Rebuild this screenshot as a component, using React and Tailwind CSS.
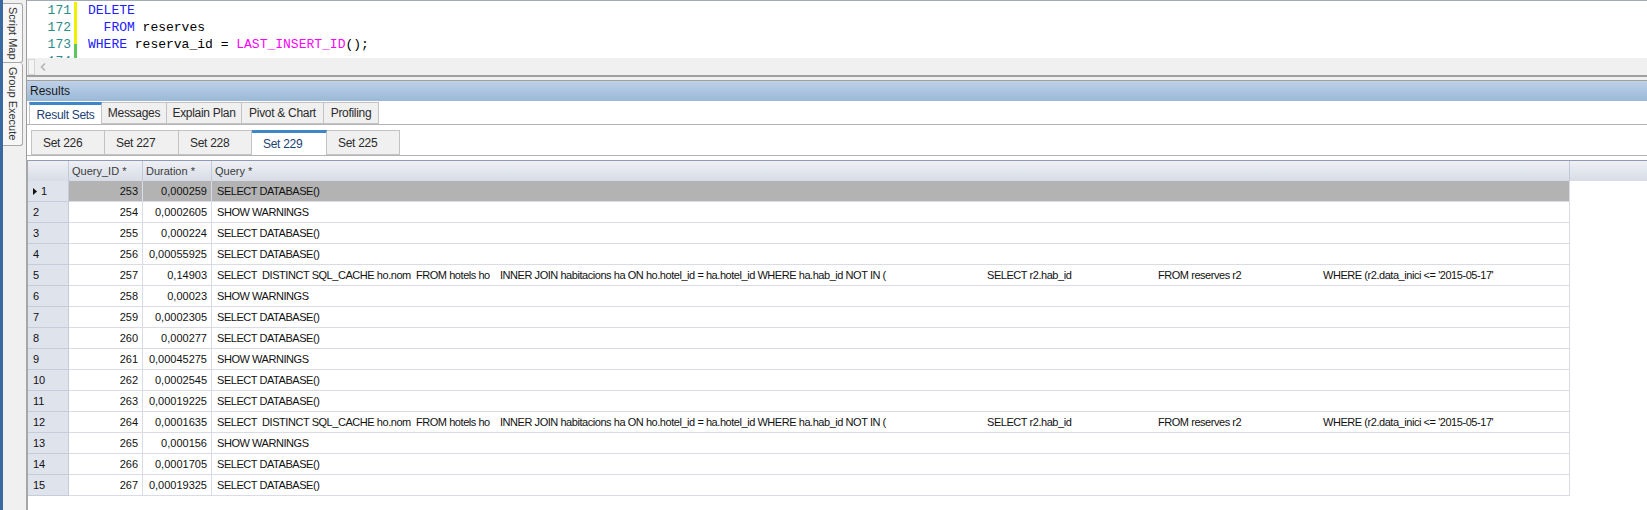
import React from "react";

const rows = [
  [1, "253", "0,000259", "SELECT DATABASE()"],
  [2, "254", "0,0002605", "SHOW WARNINGS"],
  [3, "255", "0,000224", "SELECT DATABASE()"],
  [4, "256", "0,00055925", "SELECT DATABASE()"],
  [5, "257", "0,14903", "LONG"],
  [6, "258", "0,00023", "SHOW WARNINGS"],
  [7, "259", "0,0002305", "SELECT DATABASE()"],
  [8, "260", "0,000277", "SELECT DATABASE()"],
  [9, "261", "0,00045275", "SHOW WARNINGS"],
  [10, "262", "0,0002545", "SELECT DATABASE()"],
  [11, "263", "0,00019225", "SELECT DATABASE()"],
  [12, "264", "0,0001635", "LONG"],
  [13, "265", "0,000156", "SHOW WARNINGS"],
  [14, "266", "0,0001705", "SELECT DATABASE()"],
  [15, "267", "0,00019325", "SELECT DATABASE()"],
];

const topTabs = [
  ["Result Sets", "w-[73px]", true],
  ["Messages", "w-[65px]", false],
  ["Explain Plan", "w-[75px]", false],
  ["Pivot & Chart", "w-[82px]", false],
  ["Profiling", "w-[55px]", false],
];

const setTabs = [
  ["Set 226", "w-[74px]", false],
  ["Set 227", "w-[74px]", false],
  ["Set 228", "w-[73px]", false],
  ["Set 229", "w-[75px]", true],
  ["Set 225", "w-[73px]", false],
];

function Tab({ label, width, active, first, left }) {
  return (
    <div
      className={
        "h-full flex items-center whitespace-nowrap border-[#c3c3c3] border-r " +
        width +
        (left ? " pl-[11px]" : " justify-center") +
        (first ? " border-l" : "") +
        (active
          ? " bg-white text-[#1d3f73] border-t-[3px] border-t-[#3f86c8]"
          : " bg-[#f0f0f0] text-[#2b2b2b] border-t mt-[2px] border-b")
      }
    >
      {label}
    </div>
  );
}

function LongQuery() {
  return (
    <div className="flex whitespace-pre tracking-[-0.45px]">
      <span className="w-[199px]">SELECT  DISTINCT SQL_CACHE ho.nom</span>
      <span className="w-[84px]">FROM hotels ho</span>
      <span className="w-[487px]">
        INNER JOIN habitacions ha ON ho.hotel_id = ha.hotel_id WHERE ha.hab_id NOT IN (
      </span>
      <span className="w-[171px]">SELECT r2.hab_id</span>
      <span className="w-[165px]">FROM reserves r2</span>
      <span>WHERE (r2.data_inici &lt;= '2015-05-17'</span>
    </div>
  );
}

export default function App() {
  return (
    <div className="w-[1647px] h-[510px] flex bg-[#f0f0f0] overflow-hidden font-['Liberation_Sans',Arial,sans-serif] text-[11px]">
      {/* side strip */}
      <div className="w-[3px] bg-[#3b68a0]" />
      <div className="w-[23px] pt-[3px] flex flex-col">
        <div className="w-[20px] h-[60px] bg-[#f7f7f7] border border-l-0 border-[#a8a8a8] rounded-r-[3px] flex items-center justify-center text-[#333] text-[11px] [writing-mode:vertical-rl]">
          Script Map
        </div>
        <div className="w-[20px] h-[83px] bg-[#f7f7f7] border border-l-0 border-t-0 border-[#a8a8a8] rounded-r-[3px] flex items-center justify-center text-[#333] text-[11px] [writing-mode:vertical-rl]">
          Group Execute
        </div>
      </div>

      {/* main */}
      <div className="flex-1 flex flex-col border-l border-[#9c9c9c]">
        {/* editor */}
        <div className="h-[58px] bg-white border-t border-[#a3abb6] overflow-hidden flex font-['Liberation_Mono',monospace] text-[13px] leading-[17px] pt-[1px]">
          <div className="w-[44px] text-right text-[#2b8c8c]">
            <div>171</div>
            <div>172</div>
            <div>173</div>
            <div>174</div>
          </div>
          <div className="ml-[3px] w-[3px] flex flex-col">
            <div className="h-[51px] bg-[#f0f000]" />
            <div className="h-[17px] bg-[#5cc85c]" />
          </div>
          <div className="ml-[11px] whitespace-pre text-black">
            <div className="text-[#2020ff]">DELETE</div>
            <div>
              <span className="text-[#2020ff]">  FROM</span> reserves
            </div>
            <div>
              <span className="text-[#2020ff]">WHERE</span> reserva_id ={" "}
              <span className="text-[#ff00ff]">LAST_INSERT_ID</span>();
            </div>
          </div>
        </div>

        {/* horizontal scrollbar */}
        <div className="h-[17px] bg-[#f0f0f0] flex items-center">
          <div className="ml-[1px] w-[7px] h-[16px] bg-[#f4f4f4] border border-[#d6d6d6]" />
          <svg className="ml-[5px]" width="6" height="8" viewBox="0 0 6 8">
            <path d="M5 0.5 L1.5 4 L5 7.5" fill="none" stroke="#b4b4b4" strokeWidth="1.6" />
          </svg>
        </div>
        <div className="h-[2px] bg-[#a0a0a0]" />
        <div className="h-[3px] bg-[#f0f0f0]" />

        {/* results panel */}
        <div className="flex-1 flex flex-col border-t border-[#a0a0a0] bg-white">
          <div className="h-[20px] bg-gradient-to-b from-[#bfd2e8] to-[#9ab8d8] flex items-center pl-[3px] text-[12px] text-[#1a1a1a]">
            Results
          </div>

          {/* top tabs */}
          <div className="h-[24px] flex items-end border-b border-[#b4b4b4] pl-[2px] pt-[1px] text-[12px] tracking-[-0.3px]">
            {topTabs.map(([l, w, a], i) => (
              <Tab key={l} label={l} width={w} active={a} first={i === 0} />
            ))}
          </div>

          {/* set tabs */}
          <div className="h-[31px] flex items-end border-b border-[#b4b4b4] pl-[4px] pt-[5px] text-[12px] tracking-[-0.3px]">
            {setTabs.map(([l, w, a], i) => (
              <Tab key={l} label={l} width={w} active={a} first={i === 0} left />
            ))}
          </div>

          {/* grid */}
          <div className="flex-1 mt-[4px] border-l-2 border-[#a6a6a6] -ml-[1px] bg-white">
            <div className="h-[21px] flex border-t border-[#8f9bb3] bg-gradient-to-b from-[#eef0f4] to-[#d8dce6] text-[#3a3a3a]">
              <div className="w-[41px] border-r border-[#c2c8d6]" />
              <div className="w-[74px] border-r border-[#c2c8d6] pl-[3px] flex items-center">Query_ID *</div>
              <div className="w-[69px] border-r border-[#c2c8d6] pl-[3px] flex items-center">Duration *</div>
              <div className="w-[1358px] border-r border-[#c2c8d6] pl-[3px] flex items-center">Query *</div>
              <div className="flex-1" />
            </div>
            {rows.map(([n, id, dur, q]) => {
              const sel = n === 1;
              return (
                <div key={n} className="h-[21px] flex">
                  <div className="w-[41px] bg-[#dfe3ec] border-r border-b border-[#c6ccd9] flex items-center pl-[5px] text-[#111]">
                    {sel ? (
                      <>
                        <svg width="4" height="7" viewBox="0 0 4 7" className="mr-[4px]">
                          <path d="M0 0 L4 3.5 L0 7 Z" fill="#111" />
                        </svg>
                        {n}
                      </>
                    ) : (
                      n
                    )}
                  </div>
                  <div className={"flex w-[1501px] border-b border-r border-[#d9dce6] text-[#111] " + (sel ? "bg-[#b3b3b3]" : "bg-white")}>
                    <div className="w-[74px] border-r border-[#d9dce6] text-right pr-[4px] flex items-center justify-end">{id}</div>
                    <div className="w-[69px] border-r border-[#d9dce6] text-right pr-[4px] flex items-center justify-end">{dur}</div>
                    <div className="flex-1 pl-[5px] flex items-center">
                      {q === "LONG" ? <LongQuery /> : <span className="tracking-[-0.45px]">{q}</span>}
                    </div>
                  </div>
                </div>
              );
            })}
          </div>
        </div>
      </div>
    </div>
  );
}
